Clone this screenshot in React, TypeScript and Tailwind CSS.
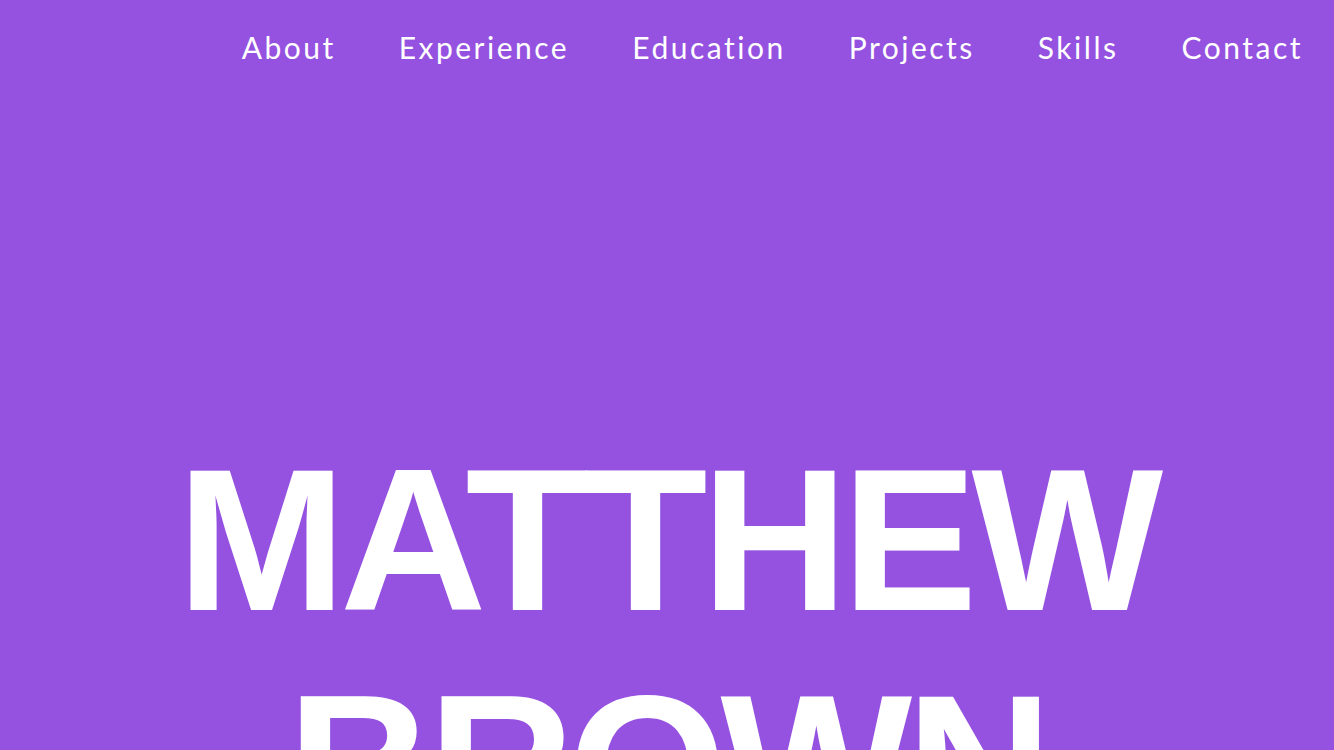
export default function App() {
  const items = ["About", "Experience", "Education", "Projects", "Skills", "Contact"];
  return (
    <div className="min-h-screen w-full bg-[#9552e0] text-white" style={{ fontFamily: "Lato, 'Open Sans', sans-serif" }}>
      <header className="flex h-[93px] items-center justify-end gap-[63px] pr-[31px]">
        {items.map((t) => (
          <a key={t} href="#" className="text-[30px] font-normal leading-none tracking-[2.5px] text-white">
            {t}
          </a>
        ))}
      </header>
      <section className="pt-[334px] text-center">
        <h1
          className="text-[203px] font-bold leading-[226px] tracking-[-6px]"
          style={{ fontFamily: "'Liberation Sans', Arial, sans-serif" }}
        >
          MATTHEW
          <br />
          BROWN
        </h1>
      </section>
    </div>
  );
}
